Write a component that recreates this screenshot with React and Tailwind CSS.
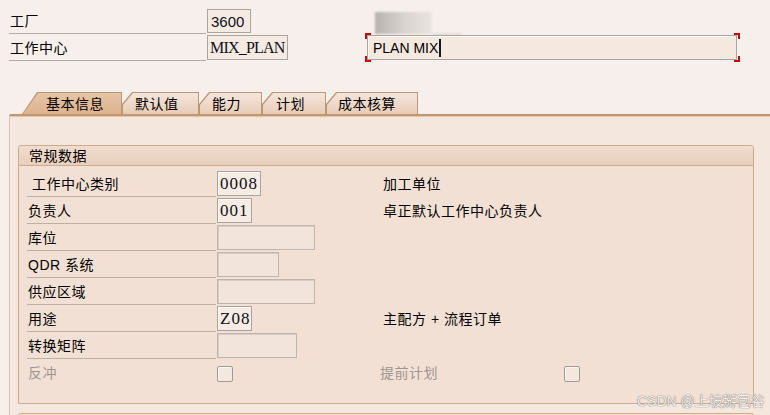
import React from "react";

const cjk = "font-['Liberation_Sans','Noto_Sans_CJK_SC',sans-serif]";

function Field({ value, w, serif, empty }) {
  return (
    <div
      className={`h-[25px] ${w} flex items-center px-[2px] border ${
        empty
          ? "border-[#bdb5ae] bg-[#f2e4da] shadow-[inset_1px_1px_0_#d8cdc4]"
          : "border-[#a9a4a0] bg-[#f7ece4] shadow-[inset_1px_1px_0_#fffaf6]"
      } ${serif ? "font-['Liberation_Serif',serif] text-[17px] tracking-[1px]" : "text-[15px]"} text-[#10101a] leading-none`}
    >
      {value}
    </div>
  );
}

function Tab({ label, w, pl, active, first }) {
  const clip = first
    ? "[clip-path:polygon(15px_0,100%_0,100%_100%,0_100%)]"
    : "[clip-path:polygon(10px_0,100%_0,100%_100%,0_100%,0_12px)]";
  return (
    <div className={`h-[22px] ${w} ${clip} bg-[#b99878] pt-[1px] pr-[1px] pl-[1px]`}>
      <div
        className={`h-full w-full ${clip} flex items-center ${pl} text-[14px] tracking-[0.5px] leading-none text-black ${
          active
            ? "bg-gradient-to-b from-[#e6c4a5] to-[#dcb390]"
            : "bg-gradient-to-b from-[#f5e6db] to-[#e8ccb8]"
        }`}
      >
        {label}
      </div>
    </div>
  );
}

function Row({ label, labelPl = "pl-[1px]", field, right, rightGrey, check, underline = true, grey }) {
  return (
    <div className="flex h-[27px] items-start">
      <div
        className={`w-[189px] h-[26px] flex items-center ${labelPl} ${
          underline ? "border-b border-[#bdb0a6]" : ""
        } ${grey ? "text-[#9c9691]" : "text-black"} text-[14px] tracking-[0.5px] leading-none`}
      >
        {label}
      </div>
      <div className="w-[167px] pl-[1px]">{field}</div>
      {right && (
        <div
          className={`w-[184px] h-[25px] flex items-center text-[14px] tracking-[0.5px] leading-none ${
            rightGrey ? "text-[#9c9691] -ml-[3px]" : "text-black"
          }`}
        >
          {right}
        </div>
      )}
      {check}
    </div>
  );
}

function Check() {
  return (
    <div className="mt-[6px] w-[16px] h-[16px] rounded-[2px] border border-[#a29a94] bg-[#f3e7de] shadow-[inset_1px_1px_0_#fff8f2]" />
  );
}

export default function App() {
  return (
    <div className={`relative w-[770px] h-[415px] overflow-hidden bg-[#f6efeb] ${cjk}`}>
      {/* header fields */}
      <div className="pt-[8px] pl-[9px]">
        <div className="flex h-[27px] items-start">
          <div className="w-[197px] h-[26px] flex items-center pl-[1px] border-b border-[#b3aca7] text-[14px] tracking-[0.5px] leading-none">
            工厂
          </div>
          <div className="pl-[1px] pt-[1px]">
            <div className="h-[24px] w-[44px] flex items-center px-[3px] border border-[#aaa5a1] bg-[#f6ebe3] text-[15px] leading-none text-[#10101a]">
              3600
            </div>
          </div>
          <div className="ml-[124px] mt-[4px] flex">
            <div className="w-[57px] h-[22px] bg-gradient-to-r from-[#b8b3af] via-[#d9d3cf] to-[#ebe5e1] blur-[1px]" />
            <div className="w-[30px] h-[4px] mt-[21px] bg-[#e6dfda] blur-[1px]" />
          </div>
        </div>
        <div className="flex h-[27px] items-start">
          <div className="w-[197px] h-[26px] flex items-center pl-[1px] border-b border-[#b3aca7] text-[14px] tracking-[0.5px] leading-none">
            工作中心
          </div>
          <div className="pl-[1px]">
            <div className="h-[25px] w-[81px] flex items-center px-[2px] border border-[#aaa5a1] bg-[#f6ebe3] font-['Liberation_Serif',serif] text-[16px] tracking-[-0.8px] leading-none text-[#10101a]">
              MIX_PLAN
            </div>
          </div>
          <div className="relative ml-[79px]">
            <div className="h-[25px] w-[370px] flex items-center pl-[5px] border border-[#a9a6a3] bg-[#f5e8de] shadow-[inset_1px_1px_0_#fffaf6] text-[14px] leading-none text-black">
              PLAN MIX
              <span className="ml-[1px] w-[2px] h-[18px] bg-[#101828]" />
            </div>
            <span className="absolute -left-[2px] -top-[2px] w-[6px] h-[6px] border-t-2 border-l-2 border-[#c00a0a]" />
            <span className="absolute -left-[2px] -bottom-[2px] w-[6px] h-[6px] border-b-2 border-l-2 border-[#c00a0a]" />
            <span className="absolute -right-[3px] -top-[2px] w-[6px] h-[6px] border-t-2 border-r-2 border-[#c00a0a]" />
            <span className="absolute -right-[3px] -bottom-[2px] w-[6px] h-[6px] border-b-2 border-r-2 border-[#c00a0a]" />
          </div>
        </div>
      </div>

      {/* tab strip */}
      <div className="mt-[30px] flex pl-[22px] h-[22px]">
        <Tab label="基本信息" w="w-[100px]" pl="pl-[23px]" active first />
        <Tab label="默认值" w="w-[77px]" pl="pl-[12px]" />
        <Tab label="能力" w="w-[63px]" pl="pl-[12px]" />
        <Tab label="计划" w="w-[64px]" pl="pl-[13px]" />
        <Tab label="成本核算" w="w-[92px]" pl="pl-[11px]" />
      </div>
      <div className="ml-[9px] h-[3px] border-t-2 border-[#c2976f] bg-[#e3c6ae] rounded-tl-[2px]" />

      {/* tab panel */}
      <div className="ml-[9px] border-l border-[#dcc4b1] bg-[#f4e7de] pt-[28px] pl-[8px] h-[300px]">
        <div className="w-[736px] border border-[#cfaa8c] rounded-t-[3px] bg-[#f3e0d4]">
          <div className="h-[20px] flex items-center pl-[10px] border-b border-[#cfaa8c] bg-gradient-to-b from-[#f0ddcf] to-[#e8cfbd] text-[14px] tracking-[0.5px] leading-none text-black rounded-t-[3px]">
            常规数据
          </div>
          <div className="pt-[5px] pl-[8px] pb-[16px]">
            <Row label="工作中心类别" labelPl="pl-[5px]" field={<Field value="0008" w="w-[44px]" serif />} right="加工单位" />
            <Row label="负责人" field={<Field value="001" w="w-[35px]" serif />} right="卓正默认工作中心负责人" />
            <Row label="库位" field={<Field value="" w="w-[98px]" empty />} />
            <Row label="QDR 系统" field={<Field value="" w="w-[62px]" empty />} />
            <Row label="供应区域" field={<Field value="" w="w-[98px]" empty />} />
            <Row label="用途" field={<Field value="Z08" w="w-[35px]" serif />} right="主配方 + 流程订单" />
            <Row label="转换矩阵" field={<Field value="" w="w-[80px]" empty />} />
            <Row
              label="反冲"
              grey
              underline={false}
              field={<Check />}
              right="提前计划"
              rightGrey
              check={<Check />}
            />
          </div>
        </div>
        <div className="mt-[9px] w-[736px] h-[10px] border-t border-l border-r border-[#cfaa8c] rounded-t-[3px] bg-[#f3e0d4]" />
      </div>

      {/* watermark */}
      <div className="absolute left-[637px] top-[394px] whitespace-nowrap text-[14px] leading-none text-[#f4eeea] [text-shadow:0_0_1px_#7e7a78,0_0_1px_#7e7a78]">
        CSDN @上坡掰苞谷
      </div>
    </div>
  );
}
